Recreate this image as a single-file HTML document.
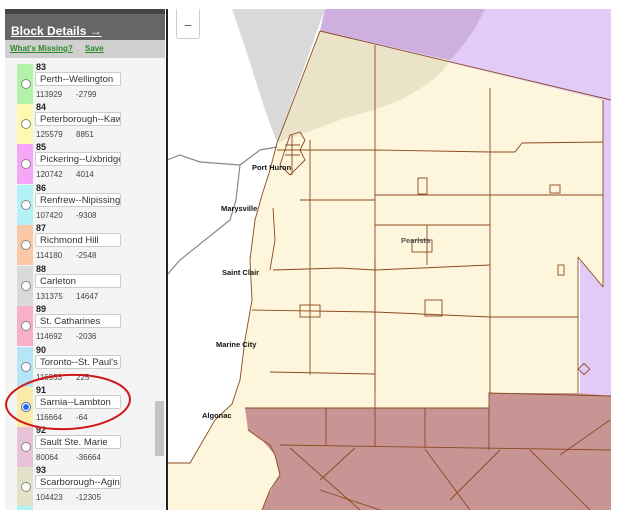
<!DOCTYPE html>
<html style="overflow:hidden"><head><meta charset="utf-8"><style>
html,body{overflow:hidden}
body{margin:0;width:627px;height:521px;background:#fff;position:relative;overflow:hidden;font-family:"Liberation Sans",sans-serif}
#panel{position:absolute;left:5px;top:9px;width:160px;height:501px;background:#f4f4f4;overflow:hidden}
#hd{position:absolute;left:0;top:0;width:160px;height:31px;background:#666;border-top:5px solid #444;box-sizing:border-box}
#hd a{position:absolute;left:6px;top:10px;color:#fff;font-weight:bold;font-size:12px;text-decoration:underline}
#bar{position:absolute;left:0;top:31px;width:160px;height:18px;background:#d0d0d0}
#bar span{position:absolute;top:4px;font-size:8px;font-weight:bold;color:#2a8a2a;text-decoration:underline}
.it{position:absolute;left:0;width:150px;height:40px}
.sw{position:absolute;left:12px;top:0;width:16px;height:40px}
.rd{position:absolute;left:16px;top:15px;width:8px;height:8px;border-radius:50%;border:1px solid #888;background:#fff}
.n{position:absolute;left:31px;top:-2px;font-size:9px;font-weight:bold;color:#222}
.in{position:absolute;left:30px;top:8px;width:86px;height:14px;background:#fff;border:1px solid #ccc;border-radius:2px;font-size:9.5px;color:#333;line-height:14px;padding-left:4px;box-sizing:border-box;white-space:nowrap;overflow:hidden}
.v{position:absolute;left:31px;top:26px;font-size:8px;color:#444}
.v2{position:absolute;left:71px;top:26px;font-size:8px;color:#444}
#sb{position:absolute;left:150px;top:392px;width:9px;height:55px;background:#c4c4c4}
#map{position:absolute;left:166px;top:9px;width:445px;height:501px;border-left:2px solid #222;box-sizing:border-box;overflow:hidden}
.lbl{font-family:"Liberation Sans",sans-serif;font-size:7.5px;font-weight:bold;fill:#111}
</style></head><body>
<div id="panel">
<div id="hd"><a>Block Details →</a></div>
<div id="bar"><span style="left:5px">What's Missing?</span><span style="left:80px">Save</span></div>
<div class="it" style="top:55px"><div class="sw" style="background:#b3f2ab"></div><div class="rd"></div><div class="n">83</div><div class="in">Perth--Wellington</div><div class="v">113929</div><div class="v2">-2799</div></div>
<div class="it" style="top:95px"><div class="sw" style="background:#fff8b0"></div><div class="rd"></div><div class="n">84</div><div class="in">Peterborough--Kaw</div><div class="v">125579</div><div class="v2">8851</div></div>
<div class="it" style="top:135px"><div class="sw" style="background:#f6a6f6"></div><div class="rd"></div><div class="n">85</div><div class="in">Pickering--Uxbridge</div><div class="v">120742</div><div class="v2">4014</div></div>
<div class="it" style="top:176px"><div class="sw" style="background:#b3f3f7"></div><div class="rd"></div><div class="n">86</div><div class="in">Renfrew--Nipissing</div><div class="v">107420</div><div class="v2">-9308</div></div>
<div class="it" style="top:216px"><div class="sw" style="background:#f9c8a8"></div><div class="rd"></div><div class="n">87</div><div class="in">Richmond Hill</div><div class="v">114180</div><div class="v2">-2548</div></div>
<div class="it" style="top:257px"><div class="sw" style="background:#d9d9d9"></div><div class="rd"></div><div class="n">88</div><div class="in">Carleton</div><div class="v">131375</div><div class="v2">14647</div></div>
<div class="it" style="top:297px"><div class="sw" style="background:#f8b0c8"></div><div class="rd"></div><div class="n">89</div><div class="in">St. Catharines</div><div class="v">114692</div><div class="v2">-2036</div></div>
<div class="it" style="top:338px"><div class="sw" style="background:#b8e4f8"></div><div class="rd"></div><div class="n">90</div><div class="in">Toronto--St. Paul's</div><div class="v">116953</div><div class="v2">225</div></div>
<div class="it" style="top:378px"><div class="sw" style="background:#fde9a8"></div><div class="rd" style="border-color:#36c;background:radial-gradient(circle,#2266ee 45%,#fff 55%)"></div><div class="n">91</div><div class="in">Sarnia--Lambton</div><div class="v">116664</div><div class="v2">-64</div></div>
<div class="it" style="top:418px"><div class="sw" style="background:#e8c2d8"></div><div class="rd"></div><div class="n">92</div><div class="in">Sault Ste. Marie</div><div class="v">80064</div><div class="v2">-36664</div></div>
<div class="it" style="top:458px"><div class="sw" style="background:#e2e2c8"></div><div class="rd"></div><div class="n">93</div><div class="in">Scarborough--Agin</div><div class="v">104423</div><div class="v2">-12305</div></div>
<div class="it" style="top:497px;height:4px"><div class="sw" style="background:#b3f3f7;height:4px"></div></div>
<div id="sb"></div>
</div>
<svg style="position:absolute;left:0;top:0" width="627" height="521">
<ellipse cx="68" cy="402" rx="62" ry="27" fill="none" stroke="#d01818" stroke-width="2" transform="rotate(-3 68 402)"/>
</svg>
<div id="map">
<svg width="445" height="501" viewBox="166 9 445 501" style="position:absolute;left:-2px;top:0">
<rect x="166" y="9" width="445" height="501" fill="#fff"/>
<path d="M232 9 L325 9 L277 143 L265 110 L246 50 Z" fill="#d9d9d9"/>
<path d="M325 9 L611 9 L611 510 L580 510 L580 100 L320 31 Z" fill="#e3cbf7"/>
<path d="M325 9 L485 9 Q470 40 450 60 L320 31 Z" fill="#cdb0e0"/>
<path d="M320 31 L603 100 L603 287 L578 257 L578 393 L489 393 L489 408 L245 408 L232 404 L240 380 L245 340 L252 300 L250 260 L255 220 L262 195 L270 170 L277 143 Z" fill="#fdf6dc"/>
<path d="M320 31 L375 45 L420 55 L450 60 Q440 80 400 100 Q370 112 345 118 L277 143 Z" fill="#ebe3c8"/>
<path d="M232 404 L215 420 L190 463 L167 463 L167 510 L262 510 L268 495 L280 475 L275 455 L262 440 L248 430 L245 408 Z" fill="#fdf6dc"/>
<path d="M245 408 L489 408 L489 393 L578 393 L611 396 L611 510 L262 510 L268 495 L280 475 L275 455 L262 440 L248 430 Z" fill="#c99494"/>
<path d="M167 160 L180 155 L200 162 L240 165 L260 150 L277 147 M240 165 L236 200 L230 220 L180 260 L167 275" fill="none" stroke="#888" stroke-width="1.2"/>
<g fill="none" stroke="#8b4a1e" stroke-width="0.9">
<path d="M320 31 L611 100"/>
<path d="M320 31 L277 143 L270 170 L262 195 L255 220 L250 260 L252 300 L245 340 L240 380 L232 404 L215 420 L190 463 L167 463"/>
<path d="M375 45 L375 393 M490 88 L490 393 M603 100 L603 287 M578 257 L578 393 M603 287 L578 257"/>
<path d="M277 150 L375 150 L490 152 L515 152 L522 143 L603 142"/>
<path d="M375 195 L490 195 L603 195 M300 200 L375 200"/>
<path d="M310 140 L310 375 M273 208 L275 240 L270 270 M273 270 L340 268 L375 270 L490 265 M375 225 L490 225 M427 225 L427 265"/>
<path d="M252 310 L375 312 L490 317 L578 317 M270 372 L375 374 M375 260 L375 408"/>
<path d="M245 408 L489 408 L489 393 L611 396"/>
<path d="M248 430 L262 440 L270 445 L275 455 L280 475 L270 490 L262 510"/>
<path d="M280 445 L611 450 M326 408 L326 445 M375 408 L375 447 M425 408 L425 448 M489 408 L489 450"/>
<path d="M290 448 L360 510 M355 448 L320 480 M425 449 L470 510 M500 450 L450 500 M530 450 L590 510 M560 455 L610 420 M320 490 L380 510"/>
<rect x="300" y="305" width="20" height="12"/>
<rect x="425" y="300" width="17" height="16"/>
<rect x="550" y="185" width="10" height="8"/>
<rect x="558" y="265" width="6" height="10"/>
<rect x="418" y="178" width="9" height="16"/>
<rect x="412" y="240" width="20" height="12"/>
<rect x="580" y="365" width="8" height="8" transform="rotate(45 584 369)"/>
<path d="M290 135 L300 132 L305 140 L300 150 L305 160 L290 175 L280 165 Z"/>
<path d="M285 145 L300 145 M285 155 L300 155 M292 135 L292 175"/>
</g>
<text x="252" y="170" class="lbl">Port Huron</text>
<text x="221" y="211" class="lbl">Marysville</text>
<text x="222" y="275" class="lbl">Saint Clair</text>
<text x="216" y="347" class="lbl">Marine City</text>
<text x="202" y="418" class="lbl">Algonac</text>
<text x="401" y="243" class="lbl" style="fill:#555">Pearlsta</text>
</svg>
<div style="position:absolute;left:8px;top:-2px;width:22px;height:30px;background:#fff;border:1px solid #ccc;border-radius:3px;text-align:center;font-size:14px;line-height:34px;color:#666">−</div>
</div>
</body></html>
